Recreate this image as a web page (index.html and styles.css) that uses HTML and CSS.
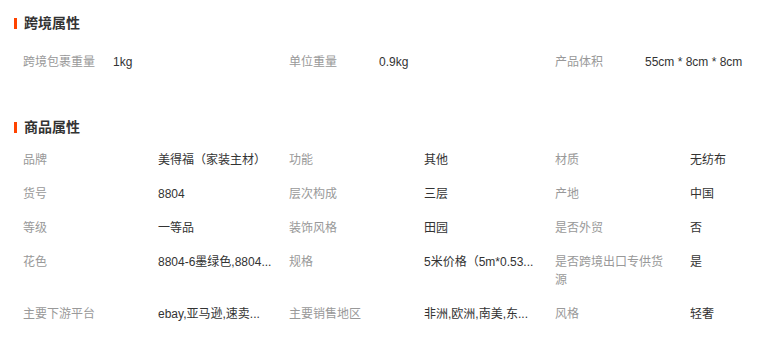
FILE: index.html
```html
<!DOCTYPE html>
<html lang="zh-CN">
<head>
<meta charset="utf-8">
<title>属性</title>
<link rel="stylesheet" href="styles.css">
</head>
<body>
<div class="page">
  <section class="block block-cross">
    <h2 class="title"><span class="bar"></span>跨境属性</h2>
    <div class="cross-row">
      <div class="cross-item"><span class="c-label">跨境包裹重量</span><span class="c-value">1kg</span></div>
      <div class="cross-item"><span class="c-label">单位重量</span><span class="c-value">0.9kg</span></div>
      <div class="cross-item"><span class="c-label">产品体积</span><span class="c-value">55cm * 8cm * 8cm</span></div>
    </div>
  </section>

  <section class="block block-goods">
    <h2 class="title"><span class="bar"></span>商品属性</h2>
    <div class="attr-grid">
      <div class="a-label">品牌</div><div class="a-value">美得福（家装主材）</div>
      <div class="a-label">功能</div><div class="a-value">其他</div>
      <div class="a-label">材质</div><div class="a-value">无纺布</div>

      <div class="a-label">货号</div><div class="a-value">8804</div>
      <div class="a-label">层次构成</div><div class="a-value">三层</div>
      <div class="a-label">产地</div><div class="a-value">中国</div>

      <div class="a-label">等级</div><div class="a-value">一等品</div>
      <div class="a-label">装饰风格</div><div class="a-value">田园</div>
      <div class="a-label">是否外贸</div><div class="a-value">否</div>

      <div class="a-label">花色</div><div class="a-value">8804-6墨绿色,8804...</div>
      <div class="a-label">规格</div><div class="a-value">5米价格（5m*0.53...</div>
      <div class="a-label">是否跨境出口专供货源</div><div class="a-value">是</div>

      <div class="a-label">主要下游平台</div><div class="a-value">ebay,亚马逊,速卖...</div>
      <div class="a-label">主要销售地区</div><div class="a-value">非洲,欧洲,南美,东...</div>
      <div class="a-label">风格</div><div class="a-value">轻奢</div>
    </div>
  </section>
</div>
</body>
</html>
```

FILE: styles.css
```css
html, body {
  margin: 0;
  padding: 0;
  background: #ffffff;
}

body {
  font-family: "Liberation Sans", "Noto Sans CJK SC", sans-serif;
  font-size: 12px;
  color: #333333;
}

.page {
  width: 784px;
}

.block {
  padding-left: 14px;
}

.title {
  display: flex;
  align-items: center;
  gap: 7px;
  margin: 0;
  height: 20px;
  line-height: 20px;
  font-size: 14px;
  font-weight: bold;
  color: #333333;
}

.bar {
  display: block;
  width: 3px;
  height: 11px;
  background: #ff4400;
}

.block-cross .title {
  margin-top: 13px;
}

.cross-row {
  display: flex;
  margin-top: 20px;
  padding-left: 9px;
  line-height: 18px;
}

.cross-item {
  display: flex;
  flex: 0 0 266px;
}

.c-label {
  flex: 0 0 90px;
  color: #999999;
}

.c-value {
  color: #333333;
  white-space: nowrap;
}

.block-goods {
  margin-top: 46px;
}

.attr-grid {
  display: grid;
  grid-template-columns: 135px 131px 135px 131px 135px 80px;
  margin-top: 6px;
  padding-left: 9px;
  line-height: 18px;
}

.a-label {
  padding: 8px 20px 8px 0;
  color: #999999;
}

.a-value {
  padding: 8px 12px 8px 0;
  color: #333333;
  white-space: nowrap;
  overflow: hidden;
}
```
